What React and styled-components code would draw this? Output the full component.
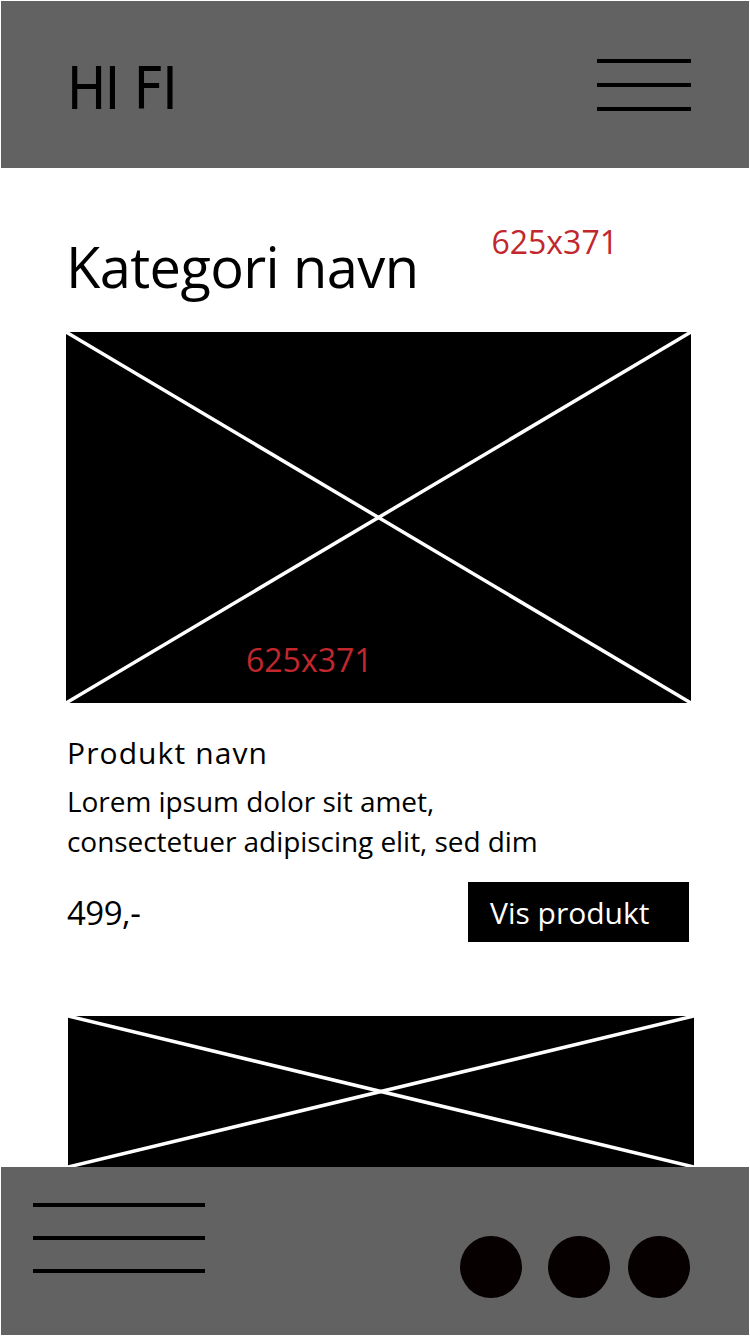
import React from 'react'
import styled, { createGlobalStyle } from 'styled-components'

const Global = createGlobalStyle`
  html, body { margin: 0; padding: 0; background: #fff; }
  body { font-family: "Open Sans", "Noto Sans", sans-serif; color: #000; }
`

const Page = styled.div`
  width: 748px;
  padding: 1px;
  background: #fff;
`
const Header = styled.header`
  height: 167px;
  background: #626262;
  display: flex;
  align-items: center;
  justify-content: space-between;
  padding: 0 58px 0 66px;
`
const Logo = styled.div`
  font-family: "DejaVu Sans", sans-serif;
  font-stretch: condensed;
  font-weight: 400;
  font-size: 58px;
  letter-spacing: -1.5px;
  line-height: 1;
  margin-top: 8px;
`
const Burger = styled.div`
  width: ${p => p.width}px;
  display: flex;
  flex-direction: column;
  gap: ${p => p.gap}px;
`
const Line = styled.span`
  display: block;
  height: 4px;
  background: #000;
`
const Main = styled.main`
  padding: 0 0 0 65px;
`
const TitleRow = styled.div`
  display: flex;
  align-items: flex-start;
  padding-top: 60px;
`
const Title = styled.h1`
  margin: 0;
  font-weight: 400;
  font-size: 56px;
  line-height: 76px;
  letter-spacing: -0.6px;
`
const Note = styled.span`
  color: #c1272d;
  font-size: 32px;
  line-height: 1;
  margin: -2px 0 0 73px;
`
const Picture = styled.div`
  position: relative;
  width: ${p => p.w}px;
  height: ${p => p.h}px;
  background: #000;
  margin-left: ${p => p.left || 0}px;
  margin-top: ${p => p.top}px;
  svg { display: block; width: 100%; height: 100%; }
`
const PicLabel = styled.span`
  position: absolute;
  left: 180px;
  bottom: 27px;
  color: #c1272d;
  font-size: 32px;
  line-height: 1;
`
const ProductName = styled.h2`
  margin: 34px 0 0 1px;
  font-weight: 400;
  font-size: 30px;
  line-height: 32px;
  letter-spacing: 1.1px;
`
const Desc = styled.p`
  margin: 12px 0 0 1px;
  font-size: 28px;
  line-height: 40px;
  letter-spacing: -0.05px;
`
const PriceRow = styled.div`
  display: flex;
  justify-content: space-between;
  align-items: center;
  width: 622px;
  margin-top: 21px;
  padding-left: 1px;
`
const Price = styled.span`
  font-size: 33px;
  letter-spacing: -0.5px;
`
const Button = styled.button`
  width: 221px;
  height: 60px;
  background: #000;
  color: #fff;
  border: 0;
  text-align: left;
  padding: 0 0 0 22px;
  font-family: "Open Sans", sans-serif;
  font-size: 30px;
  letter-spacing: 0;
`
const Footer = styled.footer`
  height: 168px;
  background: #626262;
  display: flex;
  align-items: flex-start;
  justify-content: space-between;
  padding: 0 59px 0 32px;
`
const FooterMenu = styled(Burger)`
  margin-top: 36px;
`
const Dots = styled.div`
  display: flex;
  gap: 26px;
  margin-top: 69px;
`
const Dot = styled.span`
  width: 62px;
  height: 62px;
  border-radius: 50%;
  background: #060000;
  margin-right: ${p => p.tight ? -8 : 0}px;
`

const Cross = () => (
  <svg viewBox="0 0 100 100" preserveAspectRatio="none">
    <line x1="0" y1="0" x2="100" y2="100" stroke="#fff" strokeWidth="3.5" vectorEffect="non-scaling-stroke" />
    <line x1="100" y1="0" x2="0" y2="100" stroke="#fff" strokeWidth="3.5" vectorEffect="non-scaling-stroke" />
  </svg>
)

export default function App() {
  return (
    <Page>
      <Global />
      <Header>
        <Logo>HI FI</Logo>
        <Burger width={94} gap={20}>
          <Line /><Line /><Line />
        </Burger>
      </Header>
      <Main>
        <TitleRow>
          <Title>Kategori navn</Title>
          <Note>625x371</Note>
        </TitleRow>
        <Picture w={625} h={371} top={28}>
          <Cross />
          <PicLabel>625x371</PicLabel>
        </Picture>
        <ProductName>Produkt navn</ProductName>
        <Desc>
          Lorem ipsum dolor sit amet,<br />
          consectetuer adipiscing elit, sed dim
        </Desc>
        <PriceRow>
          <Price>499,-</Price>
          <Button>Vis produkt</Button>
        </PriceRow>
        <Picture w={626} h={151} top={74} left={2}>
          <Cross />
        </Picture>
      </Main>
      <Footer>
        <FooterMenu width={172} gap={29}>
          <Line /><Line /><Line />
        </FooterMenu>
        <Dots>
          <Dot />
          <Dot tight />
          <Dot />
        </Dots>
      </Footer>
    </Page>
  )
}
